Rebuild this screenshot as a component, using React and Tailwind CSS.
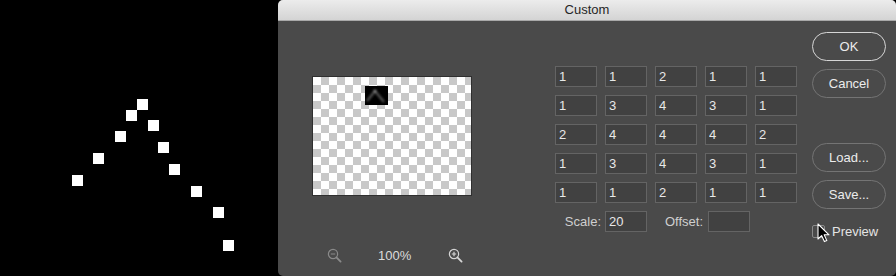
import { useState } from 'react';

const squares = [
    [137, 99], [126, 110], [148, 120], [115, 131], [158, 142], [93, 153],
    [169, 164], [72, 175], [191, 186], [213, 207], [223, 240],
];

const matrix = [
    [1, 1, 2, 1, 1],
    [1, 3, 4, 3, 1],
    [2, 4, 4, 4, 2],
    [1, 3, 4, 3, 1],
    [1, 1, 2, 1, 1],
];

function Magnifier({ plus, color }) {
    return (
        <svg width="15" height="15" viewBox="0 0 15 15" fill="none" stroke={color}>
            <circle cx="6" cy="6" r="4.6" strokeWidth="1.2" />
            <line x1="9.4" y1="9.4" x2="13.6" y2="13.6" strokeWidth="1.8" strokeLinecap="round" />
            <line x1="3.8" y1="6" x2="8.2" y2="6" strokeWidth="1.2" />
            {plus && <line x1="6" y1="3.8" x2="6" y2="8.2" strokeWidth="1.2" />}
        </svg>
    );
}

function Field({ value }) {
    return (
        <input
            readOnly
            value={value}
            className="h-[21px] w-[42px] border border-[#646464] bg-[#414141] pl-[3px] text-[13px] text-[#e8e8e8] outline-none"
        />
    );
}

function Button({ children, primary }) {
    return (
        <button
            type="button"
            className={`h-[29px] w-[74px] rounded-full border text-[13px] text-[#ececec] ${primary ? 'border-[#d6d6d6]' : 'border-[#747474]'}`}
        >
            {children}
        </button>
    );
}

export default function App() {
    const [preview, setPreview] = useState(false);

    return (
        <div className="flex h-[276px] w-[896px] overflow-hidden bg-black font-['Liberation_Sans',Arial,sans-serif]">
            {/* filtered image behind the dialog */}
            <div className="h-full w-[278px] shrink-0">
                <svg width="278" height="276">
                    {squares.map(([x, y], i) => (
                        <rect key={i} x={x} y={y} width="11" height="11" fill="#fff" />
                    ))}
                </svg>
            </div>

            <div className="flex flex-1 flex-col overflow-hidden rounded-[5px] bg-[#4a4a4a]">
                <div className="flex h-[21px] shrink-0 items-center justify-center border-b border-[#a9a9a9] bg-gradient-to-b from-[#ececec] to-[#d4d4d4] text-[13px] text-[#262626]">
                    Custom
                </div>

                <div className="relative flex flex-1 items-start">
                    {/* preview */}
                    <div className="ml-[34px] mt-[55px] flex w-[160px] flex-col">
                        <div className="relative h-[120px] w-[160px] border border-[#2f2f2f] bg-[conic-gradient(#c8c8c8_25%,#fff_0_50%,#c8c8c8_0_75%,#fff_0)] bg-[length:16px_16px]">
                            <div className="absolute left-[52px] top-[9px] h-[19px] w-[23px] bg-black">
                                <svg width="23" height="19" viewBox="0 0 23 19">
                                    <defs>
                                        <filter id="soft" x="-20%" y="-20%" width="140%" height="140%">
                                            <feGaussianBlur stdDeviation="0.9" />
                                        </filter>
                                    </defs>
                                    <g filter="url(#soft)">
                                        <polyline points="2,15 10,5 19,16" fill="none" stroke="#4e4e4e" strokeWidth="2.6" strokeLinejoin="round" />
                                        <circle cx="10" cy="5" r="1.5" fill="#8c8c8c" />
                                    </g>
                                </svg>
                            </div>
                        </div>
                        <div className="mt-[52px] flex h-[15px] items-center">
                            <div className="ml-[15px]">
                                <Magnifier color="#8a8a8a" />
                            </div>
                            <span className="ml-[36px] text-[13px] text-[#dcdcdc]">100%</span>
                            <div className="ml-[37px]">
                                <Magnifier plus color="#d6d6d6" />
                            </div>
                        </div>
                    </div>

                    {/* kernel matrix */}
                    <div className="ml-[83px] mt-[45px] flex flex-col">
                        <div className="grid grid-cols-[repeat(5,42px)] gap-x-[8px] gap-y-[8px]">
                            {matrix.flat().map((v, i) => (
                                <Field key={i} value={v} />
                            ))}
                        </div>
                        <div className="mt-[8px] flex h-[21px] items-center text-[13px] text-[#cfcfcf]">
                            <span className="w-[50px] pr-[4px] text-right">Scale:</span>
                            <Field value="20" />
                            <span className="w-[61px] pr-[5px] text-right">Offset:</span>
                            <Field value="" />
                        </div>
                    </div>

                    {/* buttons */}
                    <div className="ml-[15px] mt-[11px] flex w-[74px] flex-col">
                        <Button primary>OK</Button>
                        <div className="mt-[8px]"><Button>Cancel</Button></div>
                        <div className="mt-[45px]"><Button>Load...</Button></div>
                        <div className="mt-[8px]"><Button>Save...</Button></div>
                        <label className="mt-[13px] flex items-center text-[13px] text-[#e4e4e4]">
                            <span
                                onClick={() => setPreview(!preview)}
                                className="h-[13px] w-[13px] rounded-[2px] border border-[#8a8a8a] bg-[#4a4a4a]"
                            />
                            <span className="ml-[7px]">Preview</span>
                        </label>
                    </div>

                    {/* mouse pointer */}
                    <svg className="absolute left-[539px] top-[202px]" width="14" height="20" viewBox="0 0 14 20">
                        <path d="M1 1 L1 16 L4.6 12.6 L7.4 18.6 L9.8 17.6 L7.2 11.8 L12 11.8 Z" fill="#000" stroke="#fff" strokeWidth="1.1" strokeLinejoin="round" />
                    </svg>
                </div>
            </div>
        </div>
    );
}
